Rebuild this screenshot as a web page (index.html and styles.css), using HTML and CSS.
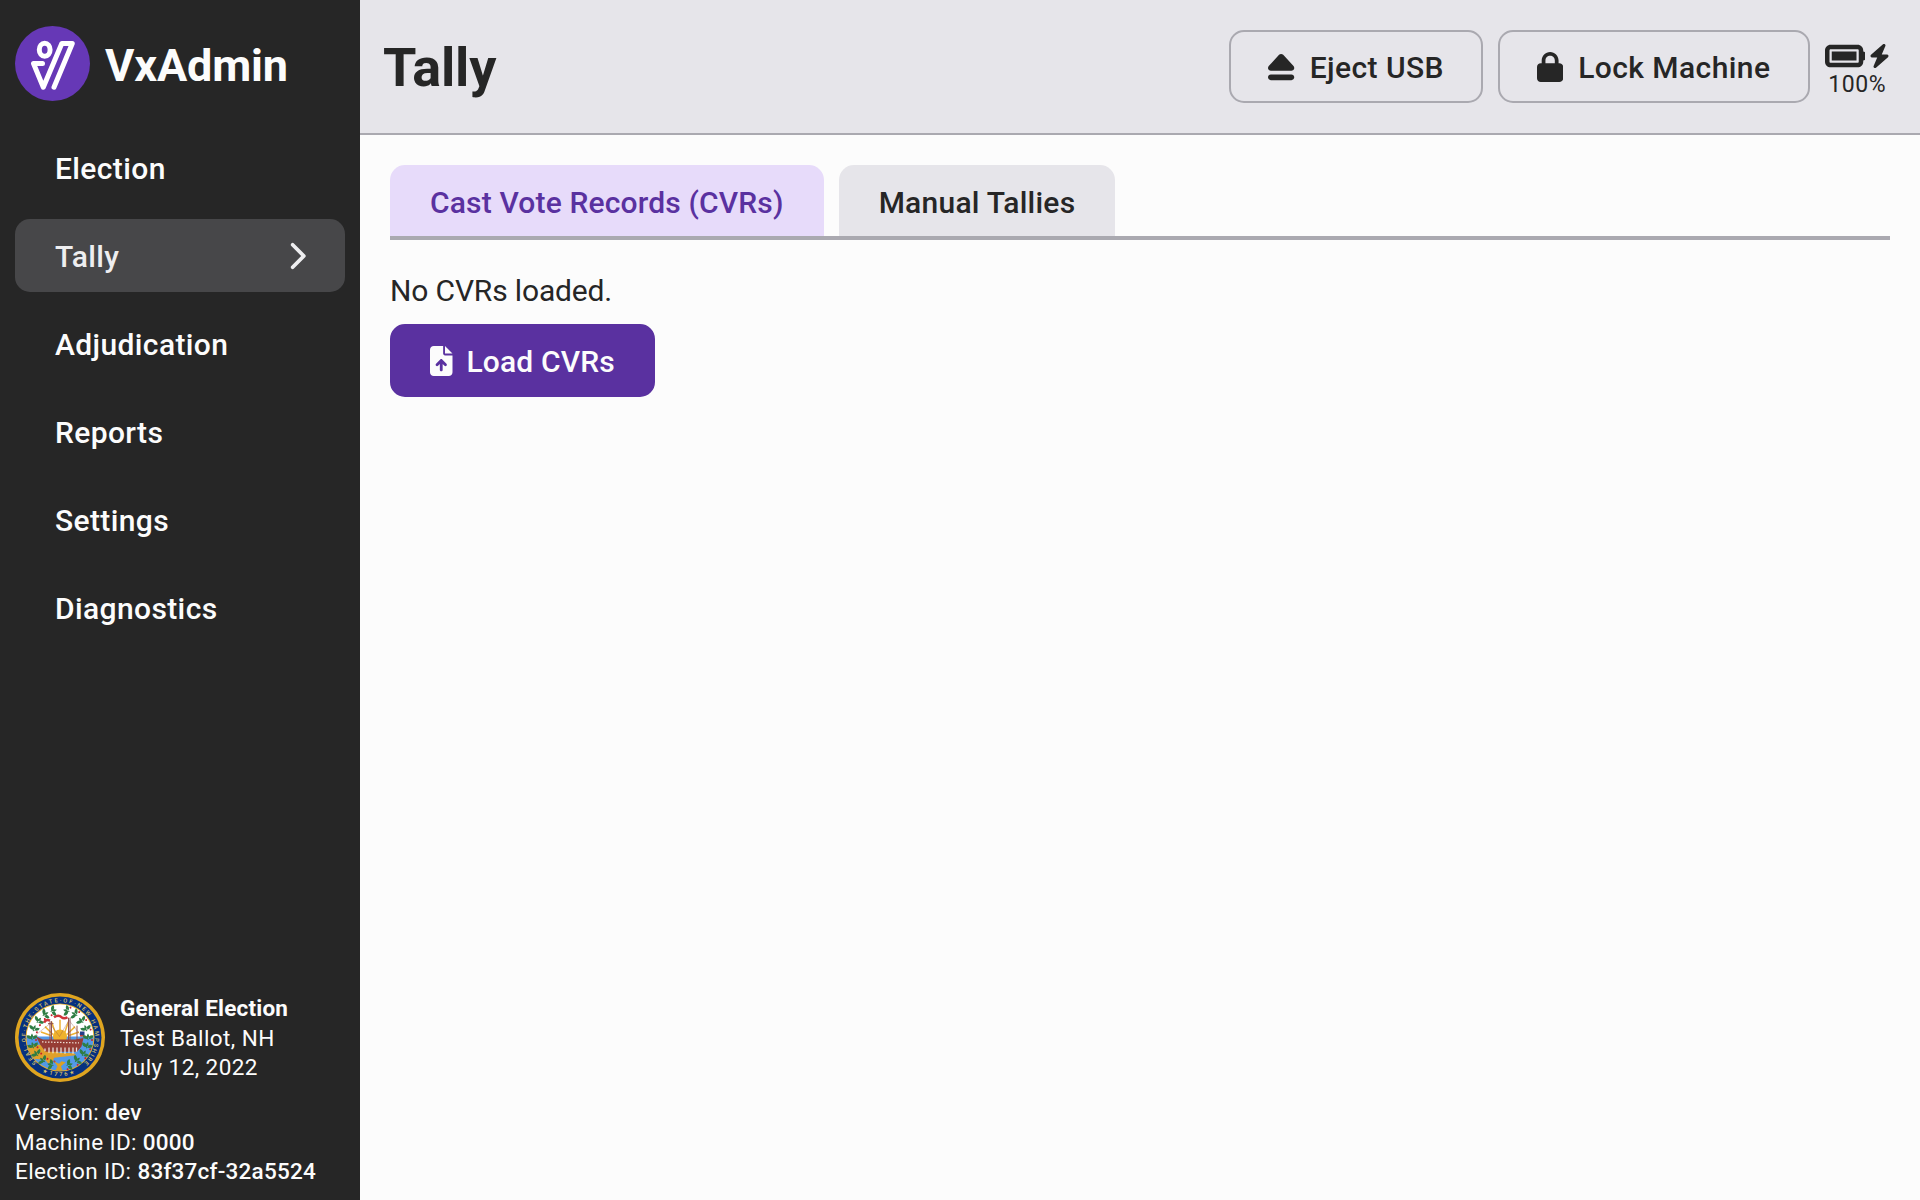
FILE: index.html
```html
<!DOCTYPE html>
<html lang="en">
<head>
<meta charset="utf-8">
<title>VxAdmin</title>
<link rel="stylesheet" href="styles.css">
</head>
<body>
<div class="app">
  <aside class="sidebar">
    <div class="brand">
      <svg class="brand-logo" viewBox="0 0 75 75">
        <circle cx="37.5" cy="37.5" r="37.5" fill="#6638b6"/>
        <g fill="none" stroke="#fff" stroke-width="5" stroke-linecap="round" stroke-linejoin="round">
          <ellipse cx="29.7" cy="23.8" rx="5.4" ry="6.5"/>
          <path d="M27.5 37.5H18.5L28.3 61.2L46.8 17.5H57.3L39 61.2"/>
        </g>
      </svg>
      <div class="brand-name">VxAdmin</div>
    </div>
    <nav class="nav">
      <a class="nav-item">Election</a>
      <a class="nav-item active">Tally
        <svg class="chevron" viewBox="0 0 320 512"><path d="M310.6 233.4c12.5 12.5 12.5 32.8 0 45.3l-192 192c-12.5 12.5-32.8 12.5-45.3 0s-12.5-32.8 0-45.3L242.7 256 73.4 86.6c-12.5-12.5-12.5-32.8 0-45.3s32.8-12.5 45.3 0l192 192z"/></svg>
      </a>
      <a class="nav-item">Adjudication</a>
      <a class="nav-item">Reports</a>
      <a class="nav-item">Settings</a>
      <a class="nav-item">Diagnostics</a>
    </nav>
    <footer class="election-info">
      <div class="election">
        <svg class="seal" viewBox="0 0 180 180" preserveAspectRatio="none">
          <defs>
            <path id="seal-arc" d="M43.7 141.4A69.2 71 0 1 1 137.5 142"/>
            <path id="seal-year" d="M55 159.5A78 78 0 0 0 127 159"/>
            <clipPath id="scene"><circle cx="90" cy="90" r="67"/></clipPath>
            <g id="sprig">
              <path fill="#2f7d43" d="M0 3q-10 1-11-7q9-2 11 7zM0 3q10 1 11-7q-9-2-11 7zM0 6q-5-8 0-14q5 7 0 14z"/>
              <circle cx="8" cy="5" r="2" fill="#c8202c"/>
            </g>
          </defs>
          <circle cx="90" cy="90" r="90" fill="#dfa520"/>
          <circle cx="90" cy="90" r="83" fill="#06307f"/>
          <circle cx="90" cy="90" r="69" fill="#e6ad2b"/>
          <g clip-path="url(#scene)">
            <path fill="#fff" d="M20 20H160V90H20z"/>
            <path fill="#5399e8" d="M20 88H160V160H20z"/>
            <path fill="#e0a02a" d="M20 106L60 104L88 121L118 122L122 126L78 131L76 138L66 142L60 135L20 132z"/>
            <g stroke="#edb234" stroke-width="3"><path d="M90 84V54M82 84L73 58M98 84L107 58M76 84L60 68M104 84L120 68M72 86L52 79M108 86L128 79"/></g>
            <circle cx="90" cy="88" r="14" fill="#efb22d"/>
            <g stroke="#91514a" stroke-width="2" fill="none"><path d="M70 57V98M73 57V98M107 50V98M110 50V98M124 66V98M66 62H77"/><path d="M40 86L70 62L89 88L108 55L136 92" stroke-width=".7"/></g>
            <path fill="#963d35" d="M42 88L56 94H120L137 91L133 108L124 119H61L51 105z"/>
            <path d="M54 99L128 101" stroke="#efded3" stroke-width="2.5" stroke-dasharray="3 3"/>
            <path d="M60 112V118M68 110V121M76 110V122M84 110V122M92 110V122M100 110V123M108 110V121M116 110V123M123 110V119" stroke="#eee6df" stroke-width="2.5"/>
            <path fill="none" stroke="#ce3439" stroke-width="5" d="M78 49q9-6 15 0q5 4 12 0M58 60q4-8 12-4"/>
            <path fill="#243e88" d="M130 78h9v7h-9z"/><path fill="#c23a3c" d="M130 85h9v3h-9z"/>
          </g>
          <g>
            <use href="#sprig" transform="translate(72 145) rotate(-75)"/><use href="#sprig" transform="translate(56 136) rotate(-50)"/><use href="#sprig" transform="translate(43 123) rotate(-35)"/><use href="#sprig" transform="translate(36 107) rotate(-15)"/><use href="#sprig" transform="translate(34 90)"/><use href="#sprig" transform="translate(38 72) rotate(20)"/><use href="#sprig" transform="translate(47 56) rotate(40)"/><use href="#sprig" transform="translate(60 43) rotate(60)"/><use href="#sprig" transform="translate(76 36) rotate(75)"/>
            <use href="#sprig" transform="translate(108 145) rotate(75)"/><use href="#sprig" transform="translate(124 136) rotate(50)"/><use href="#sprig" transform="translate(137 123) rotate(35)"/><use href="#sprig" transform="translate(144 107) rotate(15)"/><use href="#sprig" transform="translate(146 90)"/><use href="#sprig" transform="translate(142 72) rotate(-20)"/><use href="#sprig" transform="translate(133 56) rotate(-40)"/><use href="#sprig" transform="translate(120 43) rotate(-60)"/><use href="#sprig" transform="translate(104 36) rotate(-75)"/>
            <path fill="#dda020" d="M78 138l10 5 5-5 8 2-9 8 3 9H81l4-9z"/>
          </g>
          <g class="seal-text">
            <text><textPath href="#seal-arc" textLength="336">SEAL·OF·THE·STATE·OF·NEW HAMPSHIRE</textPath></text>
            <text><textPath href="#seal-year" textLength="66">★1776★</textPath></text>
          </g>
        </svg>
        <div class="election-text">
          <div class="election-title">General Election</div>
          <div>Test Ballot, NH</div>
          <div>July 12, 2022</div>
        </div>
      </div>
      <div class="machine">
        <div>Version: <b>dev</b></div>
        <div>Machine ID: <b>0000</b></div>
        <div>Election ID: <b>83f37cf-32a5524</b></div>
      </div>
    </footer>
  </aside>
  <main class="main">
    <header class="header">
      <h1 class="title">Tally</h1>
      <div class="header-actions">
        <button class="button">
          <svg class="icon" viewBox="0 0 448 512"><path d="M224 32c13.500 0 26.300 5.600 35.400 15.600l176 192c12.900 14 16.200 34.300 8.600 51.800S419 320 400 320L48 320c-19 0-36.300-11.200-43.900-28.700s-4.300-37.700 8.600-51.800l176-192C197.700 37.600 210.500 32 224 32zM0 432c0-26.500 21.500-48 48-48l352 0c26.500 0 48 21.500 48 48s-21.500 48-48 48L48 480c-26.500 0-48-21.500-48-48z"/></svg>
          <span>Eject USB</span>
        </button>
        <button class="button">
          <svg class="icon" viewBox="0 0 448 512"><path d="M144 144l0 48 160 0 0-48c0-44.200-35.800-80-80-80s-80 35.800-80 80zM80 192l0-48C80 64.500 144.500 0 224 0s144 64.500 144 144l0 48 16 0c35.300 0 64 28.700 64 64l0 192c0 35.300-28.700 64-64 64L64 512c-35.300 0-64-28.700-64-64L0 256c0-35.300 28.700-64 64-64l16 0z"/></svg>
          <span>Lock Machine</span>
        </button>
        <div class="battery">
          <div class="battery-icons">
            <svg class="battery-full" viewBox="0 0 576 512"><path d="M464 160c8.800 0 16 7.200 16 16l0 160c0 8.800-7.200 16-16 16L80 352c-8.800 0-16-7.200-16-16l0-160c0-8.800 7.200-16 16-16l384 0zM80 96C35.800 96 0 131.800 0 176L0 336c0 44.200 35.800 80 80 80l384 0c44.200 0 80-35.800 80-80l0-16c17.700 0 32-14.300 32-32l0-64c0-17.700-14.300-32-32-32l0-16c0-44.200-35.800-80-80-80L80 96zm368 96L96 192l0 128 352 0 0-128z"/></svg>
            <svg class="bolt" viewBox="0 0 448 512"><path d="M349.400 44.600c5.900-13.700 1.500-29.700-10.600-38.500s-28.600-8-39.900 1.800l-256 224c-10 8.800-13.600 22.900-8.900 35.300S50.700 288 64 288l111.500 0L98.600 467.400c-5.900 13.700-1.500 29.700 10.600 38.500s28.600 8 39.900-1.800l256-224c10-8.800 13.600-22.900 8.900-35.300s-16.600-20.700-30-20.700l-111.500 0L349.400 44.600z"/></svg>
          </div>
          <div class="battery-level">100%</div>
        </div>
      </div>
    </header>
    <section class="content">
      <div class="tabs">
        <a class="tab selected">Cast Vote Records (CVRs)</a>
        <a class="tab">Manual Tallies</a>
      </div>
      <p class="message">No CVRs loaded.</p>
      <button class="button primary">
        <svg class="icon" viewBox="0 0 384 512"><path d="M64 0C28.700 0 0 28.700 0 64L0 448c0 35.300 28.700 64 64 64l256 0c35.300 0 64-28.700 64-64l0-288-128 0c-17.700 0-32-14.300-32-32L224 0 64 0zM256 0l0 128 128 0L256 0zM216 408c0 13.300-10.700 24-24 24s-24-10.700-24-24l0-102.100-31 31c-9.400 9.400-24.600 9.400-33.900 0s-9.400-24.600 0-33.900l72-72c9.400-9.400 24.600-9.400 33.900 0l72 72c9.400 9.400 9.400 24.600 0 33.900s-24.600 9.400-33.900 0l-31-31L216 408z"/></svg>
        <span>Load CVRs</span>
      </button>
    </section>
  </main>
</div>
</body>
</html>
```
FILE: styles.css
```css
* {
  box-sizing: border-box;
}

body {
  margin: 0;
  background: #fcfcfc;
  color: #262626;
  font-family: Roboto, sans-serif;
  font-size: 30px;
  line-height: 36px;
}

.app {
  display: flex;
  height: 1200px;
}

.sidebar {
  display: flex;
  flex-direction: column;
  width: 360px;
  background: #262626;
  color: #fcfcfc;
}

.brand {
  display: flex;
  align-items: center;
  gap: 15px;
  height: 131px;
  padding: 0 15px 5px;
}

.brand-logo {
  width: 75px;
  height: 75px;
}

.brand-name {
  padding-top: 5px;
  font-size: 45px;
  font-weight: 700;
  letter-spacing: -0.15px;
}

.nav {
  display: flex;
  flex-direction: column;
  gap: 15px;
  padding: 0 15px;
}

.nav-item {
  display: flex;
  align-items: center;
  justify-content: space-between;
  height: 73px;
  padding: 2px 39px 0 40px;
  border-radius: 15px;
  font-weight: 500;
  letter-spacing: 0.38px;
  line-height: 38px;
}

.nav-item.active {
  background: #474749;
  color: #eeeef0;
}

.chevron {
  height: 30px;
  margin-bottom: 2px;
  fill: currentColor;
}

.election-info {
  margin-top: auto;
  padding: 0 15px 14px;
  font-size: 22.5px;
  letter-spacing: 0.42px;
  line-height: 29.25px;
}

.election {
  display: flex;
  align-items: center;
  gap: 15px;
  height: 90px;
  margin-bottom: 15px;
}

.seal {
  align-self: flex-start;
  width: 90px;
  height: 89px;
}

.seal-text {
  fill: #d8c16b;
  font-size: 11.5px;
  font-weight: 500;
  letter-spacing: 0;
}

.election-title {
  font-weight: 700;
  letter-spacing: 0.19px;
}

.machine {
  letter-spacing: 0.37px;
}

b {
  font-weight: 500;
  letter-spacing: 0.22px;
}

.main {
  flex: 1;
}

.header {
  display: flex;
  align-items: center;
  justify-content: space-between;
  height: 135px;
  padding: 0 30px 0 23px;
  border-bottom: 2px solid #aaa9b0;
  background: #e6e5ea;
}

.title {
  margin: 0;
  padding-top: 3px;
  font-size: 54px;
  font-weight: 700;
  letter-spacing: -0.2px;
}

.header-actions {
  display: flex;
  align-items: center;
  gap: 15px;
}

.button {
  display: flex;
  align-items: center;
  gap: 15px;
  height: 73px;
  padding: 0 37px;
  border: 2px solid #aaa9b0;
  border-radius: 15px;
  background: none;
  color: #262626;
  font: inherit;
  font-weight: 500;
  letter-spacing: 0.43px;
}

.button span {
  padding-top: 2px;
}

.button.primary {
  gap: 14px;
  padding: 0 38px;
  border-color: #5a31a0;
  background: #5a31a0;
  color: #fcfcfc;
  letter-spacing: 0.16px;
}

.icon {
  height: 30px;
  fill: currentColor;
}

.battery {
  display: flex;
  flex-direction: column;
  align-items: center;
  padding-top: 9px;
}

.battery-icons {
  display: flex;
  align-items: center;
  gap: 4px;
  height: 28px;
  fill: currentColor;
}

.battery-full {
  height: 36px;
}

.bolt {
  height: 24px;
}

.battery-level {
  font-size: 23px;
  letter-spacing: 0.6px;
  line-height: 30px;
}

.content {
  padding: 30px;
}

.tabs {
  display: flex;
  gap: 15px;
  border-bottom: 4px solid #aaa9b0;
}

.tab {
  height: 71px;
  padding: 0 40px;
  border-radius: 15px 15px 0 0;
  background: #e6e5ea;
  font-weight: 500;
  letter-spacing: 0.24px;
  line-height: 75px;
}

.tab.selected {
  background: #e7dbfa;
  color: #5a31a0;
  letter-spacing: 0.16px;
}

.message {
  margin: 31px 0 14px;
  letter-spacing: -0.15px;
  line-height: 39px;
}
```
